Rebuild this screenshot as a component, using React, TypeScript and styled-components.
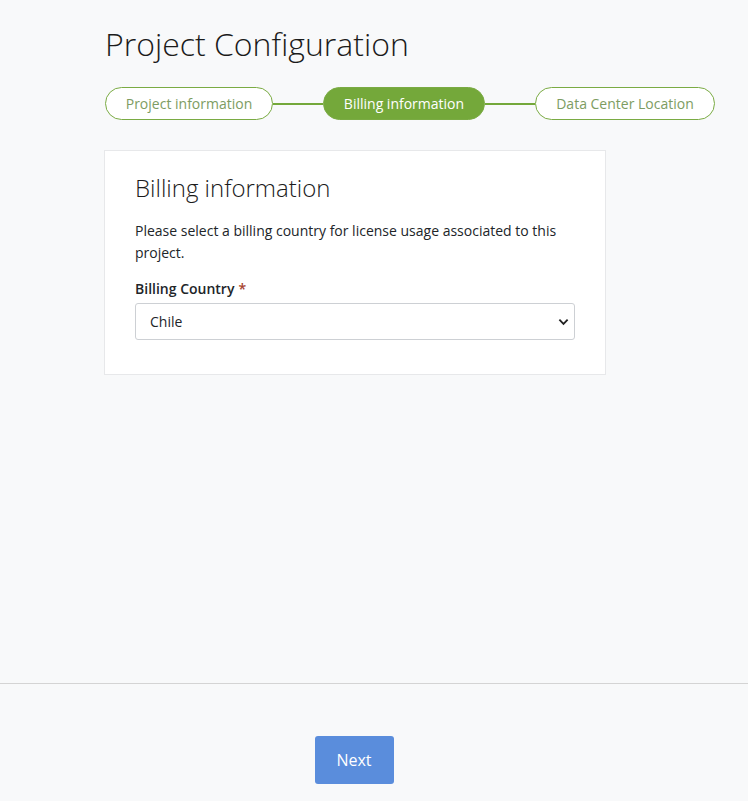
import React from 'react';
import styled, { createGlobalStyle } from 'styled-components';

const GlobalStyle = createGlobalStyle`
  html, body {
    margin: 0;
    padding: 0;
    background: #f8f9fa;
    font-family: "Open Sans", "Liberation Sans", sans-serif;
    color: #212529;
  }
  * { box-sizing: border-box; }
`;

const Page = styled.div`
  min-height: 801px;
  display: flex;
  flex-direction: column;
`;

const Main = styled.main`
  height: 684px;
  padding: 22px 0 0 104px;
  border-bottom: 1px solid #d4d4d4;
`;

const Column = styled.div`
  width: 502px;
`;

const Title = styled.h1`
  margin: 0 0 0 1px;
  font-size: 32px;
  font-weight: 300;
  line-height: 44px;
  color: #1b1b1b;
`;

const Stepper = styled.div`
  display: flex;
  align-items: center;
  margin: 21px 0 0 1px;
  width: 610px;
`;

const Step = styled.div<{ $active?: boolean; $width: number }>`
  width: ${p => p.$width}px;
  height: 33px;
  flex: none;
  display: flex;
  align-items: center;
  justify-content: center;
  border-radius: 17px;
  border: 1px solid #7aab43;
  background: ${p => (p.$active ? '#74a83a' : '#ffffff')};
  color: ${p => (p.$active ? '#ffffff' : '#7d9c62')};
  font-size: 14px;
  white-space: nowrap;
`;

const Connector = styled.div`
  flex: 1;
  height: 2px;
  background: #74a83a;
`;

const Card = styled.section`
  margin-top: 30px;
  background: #ffffff;
  border: 1px solid #e7e8ea;
  padding: 20px 30px 34px;
`;

const CardTitle = styled.h2`
  margin: 0;
  font-size: 24px;
  font-weight: 300;
  line-height: 34px;
  color: #1b1b1b;
`;

const Description = styled.p`
  margin: 15px 0 0;
  font-size: 14px;
  line-height: 22px;
  color: #212529;
`;

const Label = styled.label`
  display: block;
  margin-top: 14px;
  font-size: 14px;
  font-weight: 600;
  line-height: 22px;
  color: #212529;
`;

const Required = styled.span`
  color: #a7442e;
  margin-left: 4px;
`;

const Select = styled.select`
  display: block;
  margin-top: 3px;
  width: 100%;
  height: 37px;
  padding: 0 14px;
  font-family: inherit;
  font-size: 14px;
  color: #212529;
  background: #ffffff url("data:image/svg+xml,%3Csvg xmlns='http://www.w3.org/2000/svg' viewBox='0 0 12 8'%3E%3Cpath d='M1.5 1.5l4.5 4.5 4.5-4.5' fill='none' stroke='%23222' stroke-width='2'/%3E%3C/svg%3E") no-repeat right 5px center / 11px 8px;
  border: 1px solid #cdd0d4;
  border-radius: 3px;
  appearance: none;
`;

const Footer = styled.footer`
  display: flex;
  padding: 52px 0 0 103px;
`;

const FooterColumn = styled.div`
  width: 502px;
  display: flex;
  justify-content: center;
`;

const NextButton = styled.button`
  width: 79px;
  height: 48px;
  border: none;
  border-radius: 3px;
  background: #5a8ddc;
  color: #ffffff;
  font-family: inherit;
  font-size: 16px;
  cursor: pointer;
`;

export default function App() {
  return (
    <Page>
      <GlobalStyle />
      <Main>
        <Column>
          <Title>Project Configuration</Title>
          <Stepper>
            <Step $width={168}>Project information</Step>
            <Connector />
            <Step $width={162} $active>Billing information</Step>
            <Connector />
            <Step $width={180}>Data Center Location</Step>
          </Stepper>
          <Card>
            <CardTitle>Billing information</CardTitle>
            <Description>
              Please select a billing country for license usage associated to this project.
            </Description>
            <Label htmlFor="country">
              Billing Country<Required>*</Required>
            </Label>
            <Select id="country" defaultValue="Chile">
              <option>Argentina</option>
              <option>Brazil</option>
              <option>Chile</option>
              <option>Colombia</option>
              <option>Peru</option>
            </Select>
          </Card>
        </Column>
      </Main>
      <Footer>
        <FooterColumn>
          <NextButton>Next</NextButton>
        </FooterColumn>
      </Footer>
    </Page>
  );
}
